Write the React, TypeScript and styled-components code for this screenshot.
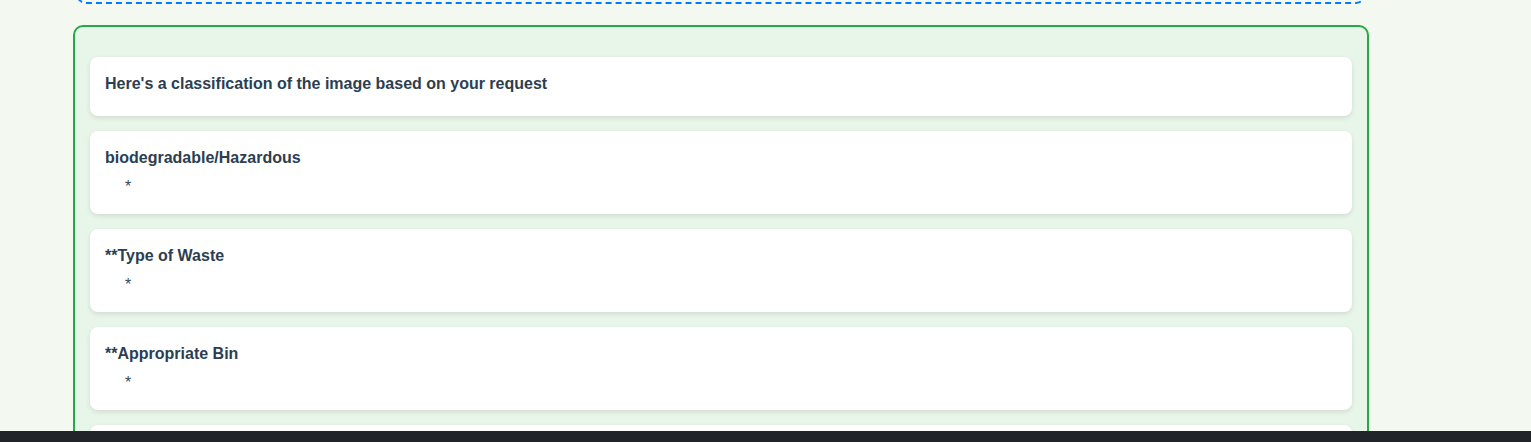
import styled, { createGlobalStyle } from 'styled-components';

const GlobalStyle = createGlobalStyle`
    html, body {
        margin: 0;
        padding: 0;
        background: #f3f8f1;
        font-family: 'Liberation Sans', Arial, sans-serif;
        color: #2c3e50;
        overflow: hidden;
    }
`;

const sections = [
    { title: "Here's a classification of the image based on your request", items: [] as string[] },
    { title: 'biodegradable/Hazardous', items: ['*'] },
    { title: '**Type of Waste', items: ['*'] },
    { title: '**Appropriate Bin', items: ['*'] }
];

const App = () => {
    return (
        <>
            <GlobalStyle />
            <Page>
                <UploadZone />
                <ResultBox>
                    {sections.map(section => (
                        <Card key={section.title}>
                            <Title $alone={section.items.length === 0}>{section.title}</Title>
                            {section.items.length > 0 && (
                                <List>
                                    {section.items.map((item, i) => (
                                        <ListItem key={i}>{item}</ListItem>
                                    ))}
                                </List>
                            )}
                        </Card>
                    ))}
                    <Card style={{ height: 60 }} />
                </ResultBox>
            </Page>
            <Footer />
        </>
    );
};

const Page = styled.main`
    width: 1296px;
    padding-top: 1px;
    margin: -193px 0 0 73px;
`;

const UploadZone = styled.div`
    height: 196px;
    margin: 0 3px 0 3px;
    border: 2px dashed #007bff;
    border-radius: 10px;
    box-sizing: border-box;
`;

const ResultBox = styled.section`
    margin-top: 21px;
    padding: 30px 15px;
    border: 2px solid #28a745;
    border-radius: 10px;
    background: #e8f5e9;
    display: flex;
    flex-direction: column;
    gap: 15px;
`;

const Card = styled.div`
    background: #fff;
    border-radius: 8px;
    padding: 16px 15px 16px;
    box-shadow: 0 2px 5px rgba(0, 0, 0, 0.1);
`;

const Title = styled.div<{ $alone: boolean }>`
    font-size: 16px;
    font-weight: bold;
    line-height: 22px;
    margin-bottom: ${p => (p.$alone ? '5px' : '0')};
`;

const List = styled.ul`
    list-style: none;
    margin: 7px 0 0 0;
    padding: 0 0 0 20px;
`;

const ListItem = styled.li`
    font-size: 16px;
    line-height: 22px;
    color: #34495e;
`;

const Footer = styled.footer`
    position: fixed;
    left: 0;
    right: 0;
    bottom: 0;
    height: 11px;
    background: #212529;
`;

export default App;
